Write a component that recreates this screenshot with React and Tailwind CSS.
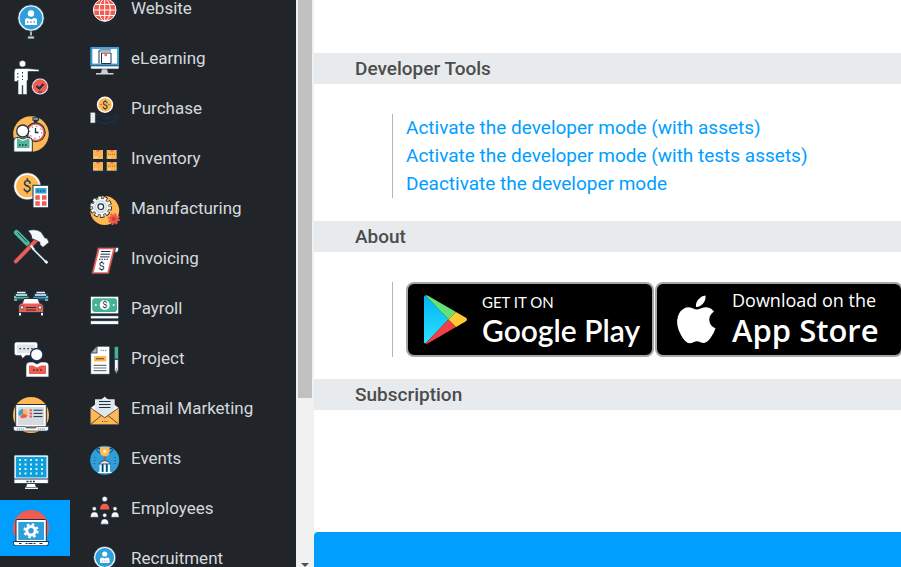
import React from "react";

const NAVY = "#17344d";

function Gear({ cx, cy, r, fill, hole, teeth = 8, outline }) {
  const mid = r * 0.86;
  const unit = (2 * Math.PI * mid) / (teeth * 2);
  return (
    <g>
      {outline && (
        <g fill="none" stroke={outline}>
          <circle cx={cx} cy={cy} r={mid} strokeWidth={r * 0.28 + 2} strokeDasharray={`${unit + 1} ${unit - 1}`} strokeDashoffset={0.5} />
          <circle cx={cx} cy={cy} r={r * 0.75} strokeWidth="1.5" />
        </g>
      )}
      <circle cx={cx} cy={cy} r={mid} fill="none" stroke={fill} strokeWidth={r * 0.28} strokeDasharray={`${unit} ${unit}`} />
      <circle cx={cx} cy={cy} r={r * 0.76} fill={fill} />
      <circle cx={cx} cy={cy} r={r * 0.36} fill={hole} />
    </g>
  );
}

function Dollar({ x, y, size, fill = NAVY }) {
  return (
    <text x={x} y={y} fontSize={size} fill={fill} textAnchor="middle" fontFamily="Roboto, sans-serif">
      $
    </text>
  );
}

const railIcons = [
  {
    name: "Recruitment",
    art: (
      <>
        <path d="M18 27v7" stroke="#dce6ee" strokeWidth="1.5" />
        <rect x="14.5" y="33" width="7" height="3" rx="1" fill="#c9d6df" stroke={NAVY} />
        <circle cx="18" cy="15" r="13.2" fill="#fff" stroke={NAVY} strokeWidth=".8" />
        <circle cx="18" cy="15" r="11.4" fill="#2f9fdb" />
        <circle cx="18" cy="10.5" r="3.2" fill="#fff" />
        <path d="M12 22v-5q0-2 3-2l3 1.500 3-1.500q3 0 3 2v5z" fill="#fff" />
        <path d="M14 19h8" stroke={NAVY} strokeWidth="1" strokeDasharray="1.300 2" />
      </>
    ),
  },
  {
    name: "Approvals",
    art: (
      <>
        <circle cx="9.500" cy="4.800" r="3.300" fill="#fff" stroke={NAVY} strokeWidth=".6" />
        <path d="M3 9.500h11l12 1v2H15v9h-1v14H9.800v-9h-.600v9H5v-13H1.200V13q0-3 1.800-3.500z" fill="#fff" stroke={NAVY} strokeWidth=".6" />
        <path d="M4.800 14v9M9.500 13v8" stroke={NAVY} strokeWidth="1" strokeDasharray="1.500 2" />
        <circle cx="27" cy="27.500" r="8.300" fill="#fff" stroke={NAVY} strokeWidth=".5" />
        <circle cx="27" cy="27.500" r="7.200" fill="#f15b50" />
        <path d="M23.500 27l2.800 2.500 4.200-4.500" fill="none" stroke={NAVY} strokeWidth="2.200" />
        <path d="M25 33h4" stroke={NAVY} />
      </>
    ),
  },
  {
    name: "Attendances",
    art: (
      <>
        <circle cx="18" cy="18" r="17.800" fill="#ffb853" />
        <path d="M19.500 3h6.500M22.700 3v4" stroke={NAVY} strokeWidth="3.600" />
        <path d="M20.500 3h4.500" stroke="#dce6ee" strokeWidth="1" />
        <circle cx="22.700" cy="16.300" r="10" fill={NAVY} />
        <circle cx="22.700" cy="16.300" r="9" fill="#f15b50" />
        <circle cx="22.700" cy="16.300" r="7.500" fill="#fff" />
        <circle cx="22.700" cy="16.300" r="6" fill="none" stroke={NAVY} strokeWidth="1" strokeDasharray="1 3.700" />
        <path d="M22.500 12v4.500h3" fill="none" stroke={NAVY} strokeWidth="1.300" />
        <circle cx="9.700" cy="15" r="6" fill="#fff" stroke={NAVY} strokeWidth="1.300" />
        <path d="M.800 36V25q0-3.500 3-3.500h2l4 1.500 4-1.500h2q3.500 0 3.500 3.500v11z" fill="#fff" stroke={NAVY} />
        <path d="M4 22v10h12.500v-10l-6.800 3z" fill="#52b897" />
        <path d="M6 29h9" stroke={NAVY} strokeWidth="1.300" strokeDasharray="1.500 1.500" />
      </>
    ),
  },
  {
    name: "Expenses",
    art: (
      <>
        <circle cx="14.300" cy="14.300" r="13.500" fill="#fff" stroke={NAVY} strokeWidth=".5" />
        <circle cx="14.300" cy="14.300" r="11.200" fill="#ffb853" />
        <Dollar x="14" y="20" size="16" />
        <rect x="20" y="13.300" width="15.500" height="22.500" fill="#fff" stroke={NAVY} strokeWidth="1" />
        <rect x="22.300" y="16" width="11.200" height="5.500" fill="#2f9fdb" />
        <path d="M24 19h8" stroke={NAVY} strokeWidth="1.200" strokeDasharray="1.500 1.500" />
        <path d="M22.300 25.500h4.500m2.200 0h4.500M22.300 31.500h4.500m2.200 0h4.500" stroke="#f15b50" strokeWidth="4.400" />
      </>
    ),
  },
  {
    name: "Maintenance",
    art: (
      <>
        <path d="M18 19l16 15.500" stroke={NAVY} strokeWidth="3.500" />
        <path d="M18 19l14.500 14.500" stroke="#fff" strokeWidth="1.400" />
        <path d="M32 33l2.500 2" stroke="#fff" strokeWidth="2.400" />
        <path d="M3.500 4.500l11 11" stroke={NAVY} strokeWidth="6.500" strokeLinecap="round" />
        <path d="M3.500 4.500l11 11" stroke="#52b897" strokeWidth="5" strokeLinecap="round" />
        <path d="M4.500 4.500l9.500 9.800" stroke={NAVY} strokeWidth=".9" />
        <path d="M2.800 33.500L23 12.500" stroke={NAVY} strokeWidth="5" strokeLinecap="round" />
        <path d="M2.800 33.500L23 12.500" stroke="#f15b50" strokeWidth="3.800" strokeLinecap="round" />
        <path d="M15 2.500q8-2 13 1.500l4 6 2 .300 2 4-6 5-3-2.500v-2.500l-5-2.500-3-1q0-4-4-8.300z" fill="#f5f7f8" stroke={NAVY} strokeWidth=".6" />
        <path d="M18 17.500l3 4" stroke="#fff" strokeWidth="2" />
      </>
    ),
  },
  {
    name: "Fleet",
    art: (
      <>
        <path d="M2 8h12l2 3.500v4H1v-4z" fill="#1b4a5c" />
        <path d="M4 7.500h8.500M3 10h11" stroke="#eef3f5" strokeWidth="1.600" />
        <path d="M1.500 12.700h14" stroke="#52b897" strokeWidth="1.600" />
        <path d="M1 15h3m-3-3h2" stroke="#fff" strokeWidth="1" />
        <path d="M22 8h12l2 3.500v4H20v-4z" fill="#1b4a5c" />
        <path d="M23.500 7.500h8.500M22 10h11" stroke="#eef3f5" strokeWidth="1.600" />
        <path d="M20.500 12.700h14" stroke="#2f9fdb" strokeWidth="1.600" />
        <path d="M32 15h3m-2-3h2" stroke="#fff" strokeWidth="1" />
        <path d="M7 27v3.500m22-3.500v3.500" stroke="#fff" strokeWidth="2" />
        <path d="M11 13.500h14l2 4.500q3.500 1 3.500 3.500v6h-25v-6q0-2.500 3.500-3.500z" fill="#f15b50" stroke={NAVY} strokeWidth=".9" />
        <path d="M11.500 14h13l1.500 4.500H10z" fill="#fff" />
        <path d="M13 22.500h10m-10 2.500h10" stroke={NAVY} strokeWidth="1" />
        <circle cx="9" cy="22.500" r="1.700" fill="#fff" stroke={NAVY} strokeWidth=".7" />
        <circle cx="27" cy="22.500" r="1.700" fill="#fff" stroke={NAVY} strokeWidth=".7" />
      </>
    ),
  },
  {
    name: "Discuss",
    art: (
      <>
        <path d="M3.500 1h19q2.200 0 2.200 2.200v9q0 2.200-2.200 2.200H13l-3.500 3-1.500-3H3.500q-2.200 0-2.200-2.200v-9Q1.300 1 3.500 1z" fill="#fff" stroke={NAVY} strokeWidth=".6" />
        <rect x="4" y="3.500" width="18" height="8.500" fill="#dfe5e8" />
        <path d="M6.500 7.700h14" stroke={NAVY} strokeWidth="1.300" strokeDasharray="1.500 2.400" />
        <circle cx="23.700" cy="13.700" r="6.200" fill="#fff" stroke={NAVY} strokeWidth="1.300" />
        <path d="M13 36V25q0-4 4-4h3l4 2 4-2h3.500q4.300 0 4.300 4v11z" fill="#fff" stroke={NAVY} strokeWidth=".6" />
        <path d="M16 24.500h4l4 2 4-2h5V33H16z" fill="#f15b50" />
        <path d="M20 29h9" stroke={NAVY} strokeWidth="1.500" strokeDasharray="1.500 2" />
      </>
    ),
  },
  {
    name: "Dashboards",
    art: (
      <>
        <circle cx="18" cy="18" r="18" fill="#ffb853" />
        <rect x="2.700" y="7.500" width="30.600" height="22.500" rx="1" fill="#fff" stroke={NAVY} />
        <rect x="5" y="10" width="26" height="18" fill="#d5dbde" />
        <circle cx="10.500" cy="16.500" r="4.500" fill="#ffb853" />
        <path d="M10 16.500V12a4.500 4.500 0 0 0-3.800 7z" fill="#2f9fdb" />
        <path d="M10.500 16.500l4 2a4.500 4.500 0 0 1-7.500 1.300z" fill="#f15b50" />
        <path d="M16.500 13.200h2.500m-2.500 3.200h2.500m-2.500 3.200h2.500" stroke="#f15b50" strokeWidth="2" />
        <path d="M20.500 13.200h9m-9 3.200h9m-9 3.200h9" stroke={NAVY} strokeWidth="1" />
        <path d="M.500 29.500h11.500l1.500 1.500h9l1.500-1.500h11.500V32q0 2-2 2h-31q-2 0-2-2z" fill="#f4f6f7" stroke={NAVY} strokeWidth=".6" />
        <path d="M4 32h7m14 0h7" stroke="#6d7c88" strokeWidth="1.200" strokeDasharray="1.200 .9" />
      </>
    ),
  },
  {
    name: "Website",
    art: (
      <>
        <path d="M14 29.500h8l1.500 4h-11z" fill="#fff" stroke={NAVY} strokeWidth=".8" />
        <path d="M12 34.300h13" stroke="#fff" strokeWidth="1.300" />
        <rect x="1" y="1" width="34.300" height="28.500" rx="1" fill="#fff" stroke={NAVY} strokeWidth=".8" />
        <rect x="2.800" y="2.800" width="30.700" height="20.700" fill="#0d9fdd" />
        <path d="M6 6h25m-25 4.500h25m-25 4.500h25m-25 4.500h25" stroke="#d8f2fc" strokeWidth="2" strokeDasharray="2 3.500" />
        <path d="M1 25h34.500" stroke={NAVY} strokeWidth="1" />
        <path d="M13.500 27.500h9" stroke={NAVY} strokeWidth="1.300" strokeDasharray="2 1.200" />
      </>
    ),
  },
  {
    name: "Settings",
    active: true,
    art: (
      <>
        <circle cx="18" cy="18" r="18" fill="#f15b50" />
        <path d="M-1 27h38v10H-1z" fill="#009eff" />
        <rect x="3" y="9.500" width="30.300" height="22" rx="1" fill="#fff" stroke={NAVY} />
        <rect x="5.300" y="12" width="25.700" height="18" fill="#2f9fdb" />
        <Gear cx={18} cy={20.800} r={7.600} fill="#fff" hole="#2f9fdb" />
        <path d="M.500 31.500h35v2q0 2.300-2.300 2.300H2.800Q.500 35.800.500 33.500z" fill="#fff" stroke={NAVY} strokeWidth="1" />
        <path d="M6 33.500h2.500m4 0h2m1 0h4m1 0h2m4 0h3" stroke={NAVY} strokeWidth="1" />
      </>
    ),
  },
];

const badgePerson = (
  <>
    <circle cx="14.700" cy="12.500" r="11" fill="#fff" stroke={NAVY} strokeWidth=".6" />
    <circle cx="14.700" cy="12.500" r="9.400" fill="#2f9fdb" />
    <circle cx="14.700" cy="9" r="2.600" fill="#fff" />
    <path d="M10 18v-4q0-1.500 2.200-1.500l2.500 1 2.500-1q2.300 0 2.300 1.500v4z" fill="#fff" />
    <path d="M12 16h6" stroke="#8fa3b3" strokeWidth="1" strokeDasharray="1 1.200" />
  </>
);

const apps = [
  {
    name: "Website",
    art: (
      <>
        <circle cx="14.700" cy="15" r="14" fill="none" stroke="#1b2f42" strokeWidth=".8" />
        <circle cx="14.700" cy="15" r="11.300" fill="#f15b50" stroke="#fff" strokeWidth="1" />
        <g fill="none" stroke="#fff" strokeWidth="1">
          <ellipse cx="14.700" cy="15" rx="5.500" ry="11" />
          <path d="M14.700 4v22M4 15h21.500M5.500 9.500h18.500M5.500 20.500h18.500" />
        </g>
      </>
    ),
  },
  {
    name: "eLearning",
    art: (
      <>
        <path d="M12 24h5l1 4h-7z" fill="#c9d1d6" />
        <path d="M6 28.800h17.500" stroke="#fff" strokeWidth="1.200" />
        <rect x=".700" y="2" width="28.300" height="22" rx="1" fill="#fff" stroke={NAVY} strokeWidth=".6" />
        <rect x="1.500" y="3" width="26.500" height="16.500" fill="#fff" stroke="#2f9fdb" strokeWidth="1.800" />
        <path d="M.800 20.800h28" stroke={NAVY} strokeWidth="1" />
        <path d="M9 6v12.500M11.500 8v10.500h9.500V8zM9 6.500q0-1.500 1-1.500h11" fill="none" stroke={NAVY} strokeWidth="1" />
        <path d="M10 5.500h11v2H10z" fill="#b4bfc7" />
        <path d="M14.500 8.500h2.500v3l-1.200-1-1.300 1z" fill="#f15b50" />
      </>
    ),
  },
  {
    name: "Purchase",
    art: (
      <>
        <circle cx="15" cy="9.700" r="8.200" fill="#fff" />
        <circle cx="15" cy="9.700" r="6.800" fill="#ffb853" />
        <Dollar x="15" y="13.500" size="10.500" />
        <path d="M10.500 9.700h1m7 0h1" stroke={NAVY} />
        <path d="M6 20q4-1 7 1h5q1.500 1.800-1 2.500h-5m5 0q6-.500 10-3 2 .500 1 2.500-6 5-12 5.800-5 0-10-3.800" fill="none" stroke="#16344f" strokeWidth="1.200" />
        <rect x=".700" y="17.800" width="4.300" height="10" fill="#fff" stroke="#8fa3b3" strokeWidth=".6" />
        <path d="M1.500 20h2m-2 2.500h2m-2 2.500h2" stroke="#b5c2cc" />
      </>
    ),
  },
  {
    name: "Inventory",
    art: (
      <>
        <path d="M.700 1.500v28M14.700 1.500v28M28.700 1.500v28M.700 15h28M.700 26.800h28" stroke="#142d45" strokeWidth="1.200" />
        <path d="M3 5h10v9H3zm13.700 0h10v9h-10zM3 17h10v8.800H3zm13.700 0h10v8.800h-10z" fill="#fbb352" />
        <path d="M6.500 5.700h3m11 0h3m-17 12h3m11 0h3" stroke="#f15b50" strokeWidth="1.600" />
        <path d="M4.500 12.300h3M18 12.300h3M4.500 24h3M18 24h3" stroke="#fbe3b8" strokeWidth="1" />
        <path d="M18 9.300h7.500M18 21h7.500" stroke="#6b5a3f" strokeWidth=".8" strokeDasharray="1 1" />
      </>
    ),
  },
  {
    name: "Manufacturing",
    art: (
      <>
        <circle cx="14.700" cy="15.500" r="14.500" fill="#ffb853" />
        <Gear cx={10.800} cy={11.700} r={10.300} fill="#f4f6f7" hole="#c5ced4" outline={NAVY} teeth={10} />
        <circle cx="10.800" cy="11.700" r="5.600" fill="none" stroke="#cdd5da" strokeWidth="1.500" />
        <circle cx="10.800" cy="11.700" r="2.800" fill="#fff" stroke={NAVY} strokeWidth="1.200" />
        <Gear cx={23.800} cy={24} r={6} fill="#f15b50" hole="#d13f36" />
      </>
    ),
  },
  {
    name: "Invoicing",
    art: (
      <>
        <path d="M23 2.300h4q2.500 0 1.500 2.500l-1 2.500h-4z" fill="#fff" stroke={NAVY} strokeWidth=".8" />
        <path d="M7.700 2.300h18L19 29H1.300z" fill="#f15b50" stroke={NAVY} strokeWidth=".8" />
        <path d="M9.500 4.200h13.500L17.300 27.200H3.800z" fill="#fff" />
        <path d="M11 6.500h9.500m-10 2.700h9.500m-10 2.700h9.500" stroke={NAVY} strokeWidth="1" />
        <path d="M9 14.300h9.500" stroke={NAVY} strokeWidth="1" strokeDasharray="1.500 1" />
        <Dollar x="11.500" y="25" size="11" />
      </>
    ),
  },
  {
    name: "Payroll",
    art: (
      <>
        <rect x=".500" y="1.300" width="28.200" height="17.500" fill="#fff" stroke={NAVY} strokeWidth=".7" />
        <path d="M4 3.300h21.500l1.500 1.700v10l-1.500 2H4l-1.800-2V5z" fill="#45b391" />
        <circle cx="14.700" cy="10" r="5" fill="#fff" />
        <Dollar x="14.700" y="13.300" size="9" />
        <circle cx="5.800" cy="10" r="1" fill="#fff" />
        <circle cx="23.700" cy="10" r="1" fill="#fff" />
        <rect x=".500" y="20.800" width="28.200" height="3" fill="#fff" stroke={NAVY} strokeWidth=".7" />
        <rect x=".500" y="25.800" width="28.200" height="3.500" fill="#fff" stroke={NAVY} strokeWidth=".7" />
      </>
    ),
  },
  {
    name: "Project",
    art: (
      <>
        <path d="M7 1.300h12.700v28H.700V8z" fill="#fff" stroke={NAVY} strokeWidth=".7" />
        <path d="M7 1.300V8H.700z" fill="#aab5bd" stroke={NAVY} strokeWidth=".8" />
        <path d="M10.500 5.300h6" stroke="#667885" strokeWidth="1" strokeDasharray="1.300 1" />
        <rect x="4" y="11" width="12.300" height="5.500" fill="#ffb853" />
        <path d="M6 13.700h8" stroke="#795f3d" strokeWidth="1.300" />
        <path d="M3.500 20.300h13m-13 2.700h13m-13 2.700h13" stroke="#667885" strokeWidth="1.200" />
        <rect x="24.200" y="1.500" width="4.300" height="12.500" fill="#45b391" stroke={NAVY} strokeWidth=".8" />
        <path d="M24.500 14.500h3.800v10l-1.900 4.500-1.900-4.500z" fill="#f4f6f7" stroke={NAVY} strokeWidth=".7" />
        <path d="M26.400 23v5" stroke="#7e8d98" strokeWidth=".8" />
      </>
    ),
  },
  {
    name: "Email Marketing",
    art: (
      <>
        <path d="M.700 12.700L14.700 1.500l14 11.200V29.300H.700z" fill="#fff" stroke={NAVY} strokeWidth=".7" />
        <path d="M5 4.300h19.700V20l-10 6-9.700-6z" fill="#e1e6e9" />
        <path d="M9 6.500h11.500m-11.500 3h11.500m-11.500 3h11.500" stroke={NAVY} strokeWidth="1" />
        <path d="M.700 13l14 9.700 14-9.700V29.300H.700z" fill="#ffb853" />
        <path d="M.900 29l10.500-8.500M28.500 29L18 20.500M.900 13l13.800 9.800L28.500 13" fill="none" stroke="#5c5140" strokeWidth="1" />
        <path d="M12 26.500h6" stroke="#7a6442" strokeWidth="1.200" strokeDasharray="1.300 .9" />
      </>
    ),
  },
  {
    name: "Events",
    art: (
      <>
        <circle cx="14.700" cy="15.300" r="14.500" fill="#2f9fdb" />
        <path d="M10 3.500q-4-.500-3 2t5 3M19.400 3.500q4-.500 3 2t-5 3" fill="none" stroke={NAVY} strokeWidth="1" />
        <path d="M10 2h9.500v5.500q-1 4-4.700 4-4-.500-4.800-4z" fill="#ffb853" />
        <path d="M13.300 5h3v3h-3z" fill="#fff0d5" />
        <path d="M14.700 11.500v4" stroke="#8a6a3a" strokeWidth="2" />
        <path d="M4.500 12v8m20.500-8v8" stroke="#1d5f87" strokeWidth="1.300" strokeDasharray="1 2" />
        <path d="M9 19q1-3 5.700-3.500 4.700.500 5.700 3.500z" fill="#dfe5e8" stroke={NAVY} strokeWidth=".8" />
        <path d="M10.500 19.500V27m4.200-7.500V27m4.200-7.500V27" stroke="#fff" strokeWidth="2" />
        <path d="M12.600 19.500V27m4.200-7.500V27" stroke={NAVY} strokeWidth="1.200" />
        <path d="M8 27.500h13.500" stroke="#fff" strokeWidth="1.200" />
      </>
    ),
  },
  {
    name: "Employees",
    art: (
      <>
        <path d="M10 9.500L5 14M19.500 9.500l5 4.500M8.500 22.500l3 3m9.500-3l-3 3" stroke="#17344d" strokeWidth="1" />
        <g fill="#fff" stroke={NAVY} strokeWidth=".5">
          <circle cx="14.700" cy="4" r="2.600" />
          <circle cx="4.300" cy="13.700" r="2" />
          <circle cx="25" cy="13.700" r="2" />
          <circle cx="14.700" cy="20.300" r="2" />
          <path d="M.500 22.300q0-5.300 3.900-5.300t3.900 5.300zM21.200 22.300q0-5.300 3.900-5.300t3.900 5.300zM10.800 29.200q0-5.200 3.900-5.200t3.900 5.200z" />
        </g>
        <path d="M10 14.500Q10 8.800 14.700 8.800T19.400 14.500z" fill="#f15b50" />
        <path d="M3 21h3m18 0h3m-13.700 7h3" stroke="#b7c2ca" strokeWidth=".8" />
      </>
    ),
  },
  { name: "Recruitment", art: badgePerson },
];

const links = [
  "Activate the developer mode (with assets)",
  "Activate the developer mode (with tests assets)",
  "Deactivate the developer mode",
];

function Rail() {
  return (
    <nav aria-label="Pinned apps" className="w-[70px] shrink-0 overflow-hidden bg-[#212529]">
      <ul className="-mt-[7px] grid h-[563px] auto-rows-fr">
        {railIcons.map((item, i) => (
          <li key={i} className={item.active ? "bg-[#009eff]" : ""}>
            <a href="#" aria-label={item.name} className="flex h-full items-center pl-[13px]">
              <svg viewBox="0 0 36 36" className="size-9">{item.art}</svg>
            </a>
          </li>
        ))}
      </ul>
    </nav>
  );
}

function AppMenu() {
  return (
    <nav aria-label="Apps" className="w-[226px] shrink-0 overflow-hidden bg-[#212529]">
      <ul className="-mt-[15px]">
        {apps.map((app) => (
          <li key={app.name}>
            <a href="#" className="flex h-[50px] items-center gap-[11px] pl-5 text-[17px] leading-5 text-[#d5d9dd]">
              <svg viewBox="0 0 30 30" className="size-[30px] shrink-0" aria-hidden="true">{app.art}</svg>
              <span className="pb-1">{app.name}</span>
            </a>
          </li>
        ))}
      </ul>
    </nav>
  );
}

function ScrollTrack() {
  return (
    <div aria-hidden="true" className="flex w-[18px] shrink-0 flex-col items-center overflow-hidden bg-[#f1f1f1]">
      <div className="h-[398px] w-[14px] shrink-0 bg-[#c1c1c1]" />
      <svg viewBox="0 0 10 4" className="mt-auto h-1 w-[10px] shrink-0">
        <path d="M1 0h8L5 4z" fill="#505050" />
      </svg>
    </div>
  );
}

function SectionTitle({ children }) {
  return (
    <h2 className="bg-[#e8ebee] pl-[41px] text-[19px] leading-[31px] font-medium text-[#4c4c4c]">{children}</h2>
  );
}

function GooglePlayBadge() {
  return (
    <a href="#" className="flex h-[75px] w-[248px] shrink-0 items-center rounded-lg border-2 border-[#a6a6a6] bg-black pl-4 text-white">
      <svg viewBox="0 0 43 49" className="mr-[15px] h-[49px] w-[43px] shrink-0" aria-hidden="true">
        <defs>
          <linearGradient id="playBlue" x1="0" y1="0" x2="0" y2="1">
            <stop offset="0" stopColor="#00b4f5" />
            <stop offset="1" stopColor="#2de2ff" />
          </linearGradient>
        </defs>
        <path d="M0 2q0-1.500 1.500-1.500L24.500 24.500 1.500 48.500Q0 48.500 0 47z" fill="url(#playBlue)" />
        <path d="M1.500.500Q3 0 4.500 1L32 17l-7.500 7.500z" fill="#63e276" />
        <path d="M1.500 48.500q1.500.500 3-.500L32 32l-7.500-7.500z" fill="#f53f46" />
        <path d="M32 17l9.500 5.500q3 2 0 4L32 32l-7.500-7.500z" fill="#ffc933" />
      </svg>
      <span className="flex flex-col whitespace-nowrap font-[Lato,sans-serif]">
        <span className="text-[15px] leading-5">GET IT ON</span>
        <span className="text-[30px] leading-9 font-semibold">Google Play</span>
      </span>
    </a>
  );
}

function AppStoreBadge() {
  return (
    <a href="#" className="flex h-[75px] w-[248px] shrink-0 items-center rounded-lg border-2 border-[#a6a6a6] bg-black pl-5 text-white">
      <svg viewBox="0 0 39 49" className="mr-4 h-[49px] w-[39px] shrink-0" fill="#fff" aria-hidden="true">
        <path d="M28.500.500q.500 4.500-2.500 8t-7 3.500q-.500-4.500 2.500-7.800T28.500.500z" />
        <path d="M20 14.500q2 0 5-1.400t6-.600q3.500.500 6 4-5 3.500-4.700 8.500.3 6 6.200 8.300-1.500 5-5 9.700Q31 47 27.500 48q-2 .300-4.500-1-3-1.300-6 0-2.500 1.200-4.500 1.200Q8.500 48 4.500 41-.500 32.500.200 25 1 17 7 13.500q4-2.200 8.500-.200 3 1.200 4.500 1.200z" />
      </svg>
      <span className="flex flex-col whitespace-nowrap font-['Open_Sans',sans-serif]">
        <span className="text-[18px] leading-5 font-medium">Download on the</span>
        <span className="text-[31px] leading-10 font-semibold">App Store</span>
      </span>
    </a>
  );
}

export default function App() {
  return (
    <div className="flex h-screen overflow-hidden bg-white font-[Roboto,sans-serif]">
      <Rail />
      <AppMenu />
      <ScrollTrack />
      <main className="flex min-w-0 flex-1 flex-col overflow-hidden pt-[53px]">
        <section>
          <SectionTitle>Developer Tools</SectionTitle>
          <div className="pt-[30px] pb-[23px] pl-[78px]">
            <ul className="border-l border-[#b5b5b5] pl-[13px] text-[19px] leading-7">
              {links.map((text) => (
                <li key={text}>
                  <a href="#" className="whitespace-nowrap text-[#009eff]">{text}</a>
                </li>
              ))}
            </ul>
          </div>
        </section>
        <section>
          <SectionTitle>About</SectionTitle>
          <div className="pt-[30px] pb-[22px] pl-[78px]">
            <div className="flex gap-px border-l border-[#b5b5b5] pl-[13px]">
              <GooglePlayBadge />
              <AppStoreBadge />
            </div>
          </div>
        </section>
        <section>
          <SectionTitle>Subscription</SectionTitle>
        </section>
        <div className="mt-[122px] flex-1 rounded-tl bg-[#009eff]" />
      </main>
    </div>
  );
}
